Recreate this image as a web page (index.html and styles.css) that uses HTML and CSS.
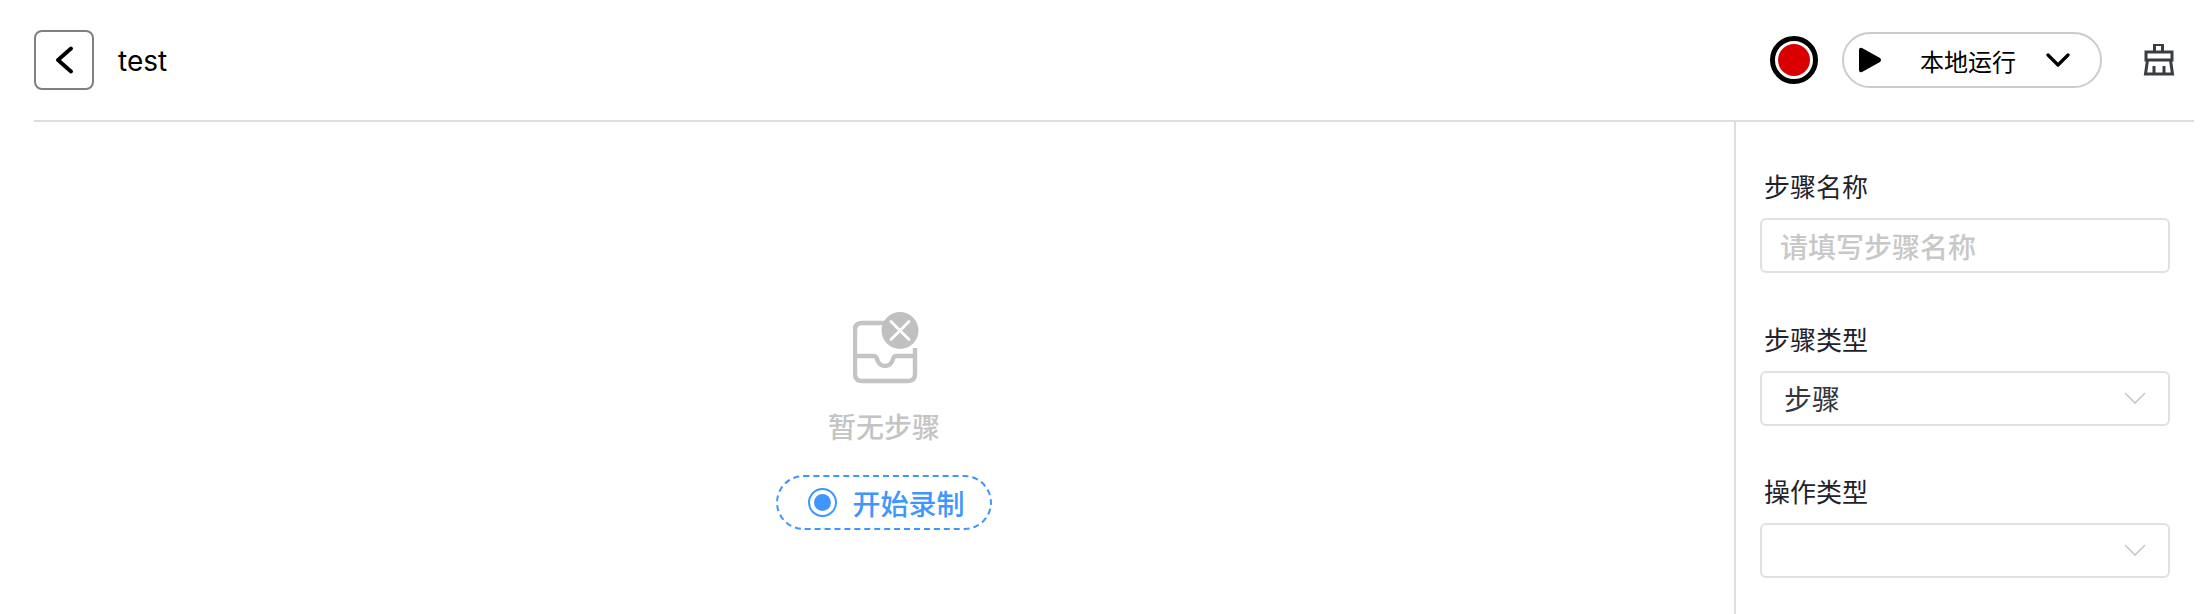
FILE: index.html
```html
<!DOCTYPE html>
<html lang="zh-CN">

<head>
    <meta charset="UTF-8" />
    <title>test</title>
    <link rel="stylesheet" href="styles.css">
</head>

<body>
    <div class="page">
        <header class="header">
            <button class="back-btn">
                <svg width="22" height="28" viewBox="0 0 22 28"><path d="M18 2.500 L5 14 L18 25.500" fill="none" stroke="#000" stroke-width="3.800" stroke-linecap="round" stroke-linejoin="round" /></svg>
            </button>
            <span class="title">test</span>
            <div class="actions">
                <span class="record"><span class="record-dot"></span></span>
                <div class="run-btn">
                    <svg class="run-play" width="24" height="26" viewBox="0 0 24 26"><path d="M1 3 Q1 0 4 1 L22 11 Q24 13 22 15 L4 25 Q1 26 1 23 Z" fill="#000" /></svg>
                    <span class="run-label">本地运行</span>
                    <svg class="run-arrow" width="24" height="14" viewBox="0 0 24 14"><path d="M2 2 L12 12 L22 2" fill="none" stroke="#000" stroke-width="3.200" stroke-linecap="round" stroke-linejoin="round" /></svg>
                </div>
                <svg class="broom" width="32" height="32" viewBox="0 0 32 32" fill="none" stroke="#3a3d42" stroke-width="3">
                    <path d="M11.500 8 V0.500 H19.500 V8" />
                    <path d="M3 8 H29 V16 H3 Z" />
                    <path d="M4.500 16 L2.500 30 H29.500 L27.500 16" />
                    <path d="M11 22 V30 M21 22 V30" />
                </svg>
            </div>
        </header>

        <div class="content">
            <main class="canvas">
                <svg class="empty-icon" width="66" height="72" viewBox="0 0 66 72">
                    <path d="M36 11 H9 Q2 11 2 18 V62 Q2 69 9 69 H55 Q62 69 62 62 V36" fill="none" stroke="#c4c4c4" stroke-width="4.400" />
                    <path d="M2 44 H21 Q23 44 24 47 Q26 54 32 54 Q38 54 40 47 Q41 44 43 44 H62" fill="none" stroke="#c4c4c4" stroke-width="4.400" />
                    <circle cx="47" cy="18.500" r="18.500" fill="#c0c0c0" />
                    <path d="M38 9.500 L56 27.500 M56 9.500 L38 27.500" stroke="#fff" stroke-width="2.800" stroke-linecap="round" />
                </svg>
                <p class="empty-text">暂无步骤</p>
                <button class="start-btn">
                    <span class="radio"><span class="radio-dot"></span></span>
                    开始录制
                </button>
            </main>

            <aside class="side">
                <div class="field">
                    <label>步骤名称</label>
                    <div class="control placeholder">请填写步骤名称</div>
                </div>
                <div class="field">
                    <label>步骤类型</label>
                    <div class="control select">
                        <span>步骤</span>
                        <svg width="22" height="13" viewBox="0 0 22 13"><path d="M1 1 L11 11 L21 1" fill="none" stroke="#c8c8c8" stroke-width="1.600" /></svg>
                    </div>
                </div>
                <div class="field">
                    <label>操作类型</label>
                    <div class="control select">
                        <span></span>
                        <svg width="22" height="13" viewBox="0 0 22 13"><path d="M1 1 L11 11 L21 1" fill="none" stroke="#c8c8c8" stroke-width="1.600" /></svg>
                    </div>
                </div>
            </aside>
        </div>
    </div>
</body>

</html>
```

FILE: styles.css
```css
* {
    box-sizing: border-box;
}

html,
body {
    margin: 0;
    height: 100%;
    overflow: hidden;
    background: #fff;
}

body {
    font-family: Inter, "Noto Sans CJK SC", sans-serif;
    color: #000;
}

.page {
    height: 614px;
    padding: 0 18px 0 34px;
    display: flex;
    flex-direction: column;
}

.header {
    height: 122px;
    flex-shrink: 0;
    border-bottom: 2px solid #dedede;
    display: flex;
    align-items: center;
}

.back-btn {
    width: 60px;
    height: 60px;
    padding: 0;
    background: #fff;
    border: 2px solid #808080;
    border-radius: 8px;
    display: flex;
    align-items: center;
    justify-content: center;
}

.title {
    margin: 2px 0 0 24px;
    font-size: 28px;
}

.actions {
    margin-left: auto;
    margin-right: 19px;
    display: flex;
    align-items: center;
}

.record {
    width: 48px;
    height: 48px;
    border: 5px solid #000;
    border-radius: 50%;
    display: flex;
    align-items: center;
    justify-content: center;
}

.record-dot {
    width: 32px;
    height: 32px;
    border-radius: 50%;
    background: #d90000;
}

.run-btn {
    width: 260px;
    height: 56px;
    margin-left: 24px;
    padding: 0 30px 0 14px;
    border: 2px solid #cccccc;
    border-radius: 28px;
    display: flex;
    align-items: center;
}

.run-label {
    margin-left: 38px;
    font-size: 24px;
}

.run-arrow {
    margin-left: auto;
}

.broom {
    margin-left: 41px;
}

.content {
    flex: 1;
    display: flex;
    min-height: 0;
}

.canvas {
    flex: 1;
    padding-top: 190px;
    display: flex;
    flex-direction: column;
    align-items: center;
}

.empty-icon {
    margin-left: 3px;
}

.empty-text {
    margin: 24px 0 0;
    font-size: 28px;
    font-weight: 500;
    line-height: 40px;
    color: #c4c4c4;
}

.start-btn {
    margin-top: 27px;
    width: 216px;
    height: 55px;
    padding: 0 0 0 5px;
    background: #fff;
    border: 2px dashed #4096ff;
    border-radius: 28px;
    color: #4096ff;
    font-family: inherit;
    font-size: 28px;
    font-weight: 500;
    display: flex;
    align-items: center;
    justify-content: center;
    gap: 15px;
}

.radio {
    width: 29px;
    height: 29px;
    border: 2px solid #4096ff;
    border-radius: 50%;
    display: flex;
    align-items: center;
    justify-content: center;
}

.radio-dot {
    width: 17px;
    height: 17px;
    border-radius: 50%;
    background: #4096ff;
}

.side {
    width: 460px;
    border-left: 2px solid #dedede;
    padding: 47px 24px 0 24px;
}

.field {
    margin-bottom: 48.500px;
}

.field label {
    display: block;
    margin: 0 0 11px 4px;
    font-size: 26px;
    line-height: 38px;
    color: #1f2329;
}

.control {
    width: 410px;
    height: 55px;
    border: 2px solid #e0e0e6;
    border-radius: 6px;
    font-size: 28px;
    display: flex;
    align-items: center;
}

.placeholder {
    padding-left: 18px;
    color: #c8c8c8;
    font-weight: 500;
}

.select {
    padding: 0 22px;
    justify-content: space-between;
    color: #33363b;
}
```
